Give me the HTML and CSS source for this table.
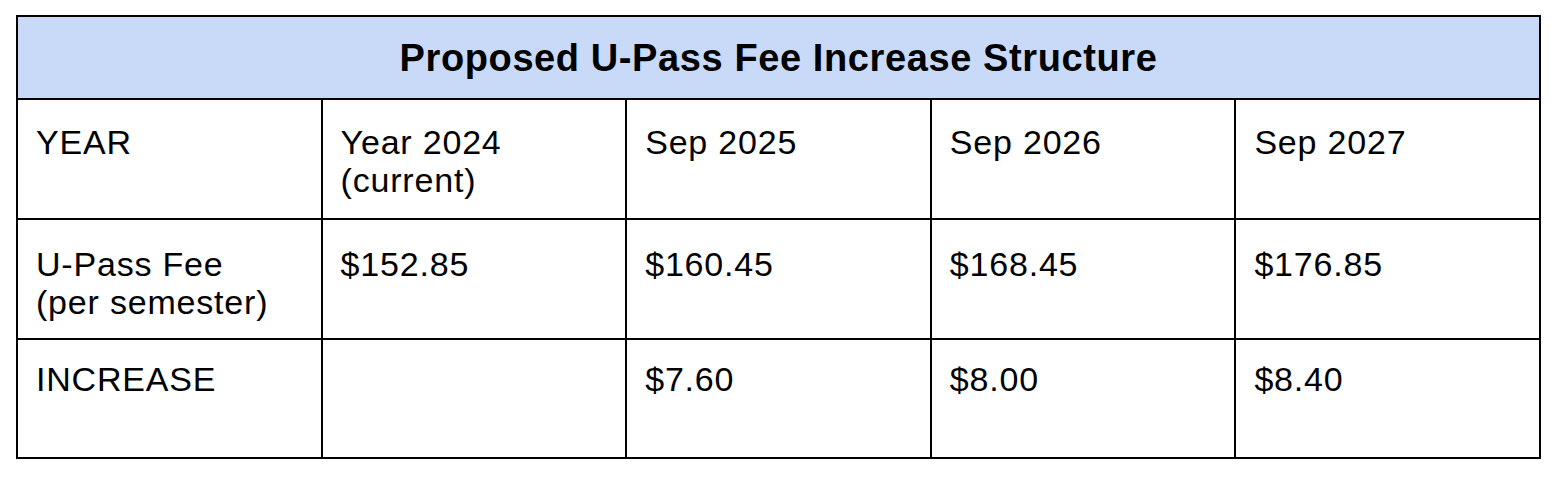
FILE: index.html
```html
<!DOCTYPE html>
<html lang="en">
<head>
<meta charset="utf-8">
<title>Proposed U-Pass Fee Increase Structure</title>
<link rel="stylesheet" href="styles.css">
</head>
<body>
<div class="page">
  <div class="fee-table">
    <div class="cell title">Proposed U-Pass Fee Increase Structure</div>

    <div class="cell r1">YEAR</div>
    <div class="cell r1">Year 2024<br>(current)</div>
    <div class="cell r1">Sep 2025</div>
    <div class="cell r1">Sep 2026</div>
    <div class="cell r1">Sep 2027</div>

    <div class="cell r2">U-Pass Fee<br>(per semester)</div>
    <div class="cell r2">$152.85</div>
    <div class="cell r2">$160.45</div>
    <div class="cell r2">$168.45</div>
    <div class="cell r2">$176.85</div>

    <div class="cell r3">INCREASE</div>
    <div class="cell r3"></div>
    <div class="cell r3">$7.60</div>
    <div class="cell r3">$8.00</div>
    <div class="cell r3">$8.40</div>
  </div>
</div>
</body>
</html>
```

FILE: styles.css
```css
html, body {
  margin: 0;
  padding: 0;
  background: #ffffff;
}

.page {
  padding: 15px 0 0 16px;
}

.fee-table {
  width: 1525px;
  box-sizing: border-box;
  display: grid;
  grid-template-columns: repeat(5, 1fr);
  grid-template-rows: 81px 118px 118px 117px;
  gap: 2px;
  padding: 2px;
  background: #000000;
  font-family: "Liberation Sans", Arial, sans-serif;
  color: #000000;
}

.cell {
  background: #ffffff;
  font-size: 34px;
  line-height: 38px;
  letter-spacing: 0.8px;
  padding: 0 10px 0 18px;
  box-sizing: border-box;
}

.title {
  grid-column: 1 / -1;
  background: #c9daf8;
  font-weight: bold;
  font-size: 38px;
  letter-spacing: 0.6px;
  display: flex;
  align-items: center;
  justify-content: center;
  padding: 0;
}

.r1 { padding-top: 23px; }
.r2 { padding-top: 25px; }
.r3 { padding-top: 20px; }
```
